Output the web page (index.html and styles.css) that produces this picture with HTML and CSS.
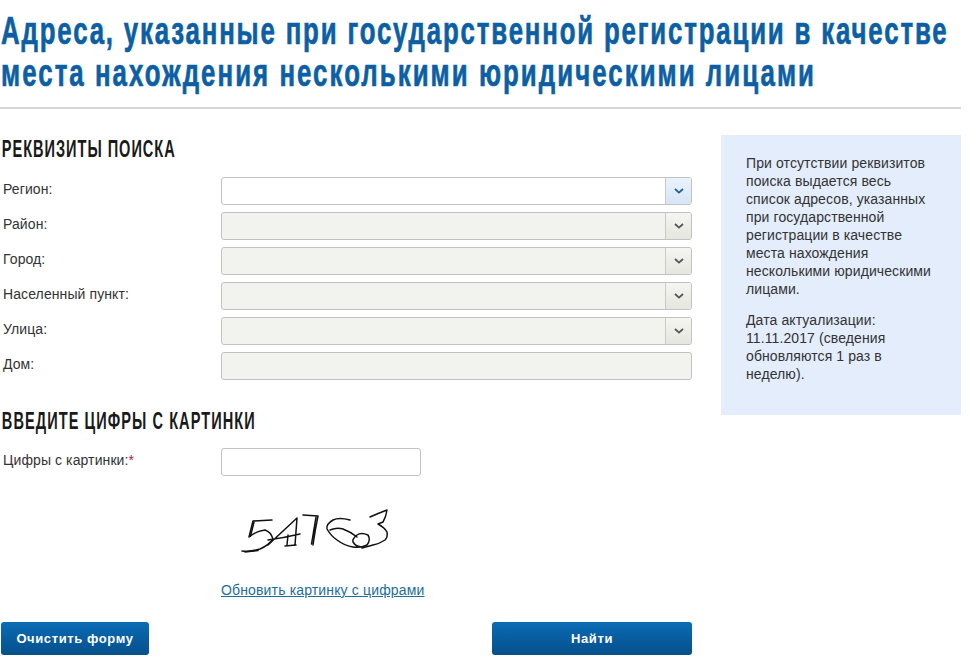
FILE: index.html
```html
<!DOCTYPE html>
<html lang="ru">
<head>
<meta charset="utf-8">
<title>Адреса</title>
<link rel="stylesheet" href="styles.css">
</head>
<body>
<main class="page">
  <header class="title-wrap">
    <h1 class="title"><span class="title-line">Адреса, указанные при государственной регистрации в качестве</span> <span class="title-line title-line-2">места нахождения несколькими юридическими лицами</span></h1>
  </header>
  <div class="columns">
    <form class="form">
      <h2 class="section section-first">Реквизиты поиска</h2>
      <div class="fields">
        <div class="row"><label class="label">Регион:</label><div class="select"><span class="select-value"></span><span class="arrow"><svg viewBox="0 0 10 6" class="chev chev-blue"><path d="M1 1l4 3.6L9 1"/></svg></span></div></div>
        <div class="row"><label class="label">Район:</label><div class="select off"><span class="select-value"></span><span class="arrow"><svg viewBox="0 0 10 6" class="chev"><path d="M1 1l4 3.6L9 1"/></svg></span></div></div>
        <div class="row"><label class="label">Город:</label><div class="select off"><span class="select-value"></span><span class="arrow"><svg viewBox="0 0 10 6" class="chev"><path d="M1 1l4 3.6L9 1"/></svg></span></div></div>
        <div class="row"><label class="label">Населенный пункт:</label><div class="select off"><span class="select-value"></span><span class="arrow"><svg viewBox="0 0 10 6" class="chev"><path d="M1 1l4 3.6L9 1"/></svg></span></div></div>
        <div class="row"><label class="label">Улица:</label><div class="select off"><span class="select-value"></span><span class="arrow"><svg viewBox="0 0 10 6" class="chev"><path d="M1 1l4 3.6L9 1"/></svg></span></div></div>
        <div class="row"><label class="label">Дом:</label><div class="select off"><span class="select-value"></span></div></div>
      </div>
      <h2 class="section section-second">Введите цифры с картинки</h2>
      <div class="row"><label class="label">Цифры с картинки:<span class="req">*</span></label><div class="captcha-input"></div></div>
      <div class="captcha-block">
        <svg class="captcha" viewBox="0 0 180 60" role="img" aria-label="Картинка с цифрами">
          <g fill="none" stroke="#111" stroke-width="1.5" stroke-linecap="round" stroke-linejoin="round">
            <path d="M21 49Q30 50 39 47Q48 43 52 37Q50 30 44 28Q35 29 28 35L32 19L51 18"/>
            <path d="M24 50L37 48.500M29.500 34L33 20"/>
            <path d="M47 43L76 16L74 43M47 38Q62 36 79 32M64 44L75 43M67 33L66 43"/>
            <path d="M82 13L97 14Q94 28 92 43M95 15L90.500 42"/>
            <path d="M129 18Q118 15 112 18Q105 22 106 27Q110 34 116 38Q124 44 132 45Q140 46 146 43Q150 38 147 33Q140 30 136 33Q131 37 132 40Q135 45 141 45"/>
            <path d="M109 28Q116 25 122 27Q130 30 136 35"/>
            <path d="M149 15Q158 11 166 8Q165 15 162 20L157 22Q164 26 166 30Q167 35 164 38Q158 42 152 43L141 46"/>
          </g>
        </svg>
        <a class="refresh" href="#">Обновить картинку с цифрами</a>
      </div>
      <div class="actions">
        <button class="btn btn-clear" type="button">Очистить форму</button>
        <button class="btn btn-find" type="button">Найти</button>
      </div>
    </form>
    <aside class="info">
      <p class="info-p">При отсутствии реквизитов поиска выдается весь список адресов, указанных при государственной регистрации в качестве места нахождения несколькими юридическими лицами.</p>
      <p class="info-p">Дата актуализации: 11.11.2017 (сведения обновляются 1 раз в неделю).</p>
    </aside>
  </div>
</main>
</body>
</html>
```
FILE: styles.css
```css
* { box-sizing: border-box; }
html, body { margin: 0; padding: 0; background: #fff; }
body { font-family: "Liberation Sans", Arial, sans-serif; font-size: 14px; letter-spacing: 0.1px; color: #333; }
.page { width: 961px; height: 672px; overflow: hidden; }
.title-wrap { height: 109px; padding: 10px 0 0 1px; margin-bottom: 0; border-bottom: 2px solid #d6d6d6; overflow: hidden; }
.title {
  margin: 0; width: 1412px;
  transform: scaleX(0.68); transform-origin: 0 0;
  font-family: "Liberation Sans", sans-serif;
  font-size: 38px; line-height: 42px; font-weight: 700; color: #0c5fa5; letter-spacing: 2.67px;
  -webkit-text-stroke: 0.7px #0c5fa5;
}
.title-line { display: block; white-space: nowrap; }
.title-line-2 { letter-spacing: 3px; }
.columns { display: flex; justify-content: space-between; align-items: flex-start; padding-top: 26px; }
.form { width: 692px; }
.section {
  margin: 0; padding-left: 3px; width: 1000px;
  transform: scaleX(0.62); transform-origin: 0 0;
  font-family: "Liberation Sans", sans-serif;
  font-size: 23.5px; line-height: 26px; font-weight: 700; color: #1a1a1a; text-transform: uppercase; letter-spacing: 1.56px;
}
.section-first { margin-top: 1px; margin-bottom: 15px; }
.section-second { margin-top: 28px; margin-bottom: 14px; letter-spacing: 1.7px; }
.fields { display: flex; flex-direction: column; gap: 7px; }
.row { display: flex; align-items: flex-start; height: 28px; }
.label { width: 221px; padding: 4px 0 0 3px; line-height: 16px; color: #333; flex: none; }
.req { color: #a0203a; }
.select { flex: 1; height: 28px; display: flex; border: 1px solid #c2c2c2; border-radius: 3px; background: #fff; overflow: hidden; }
.select.off { background: #f2f2ef; }
.select-value { flex: 1; }
.arrow { width: 26px; flex: none; display: flex; align-items: center; justify-content: center; border-left: 1px solid #c9c9c9; background: linear-gradient(#eaf3fb, #d6e6f5); }
.off .arrow { background: linear-gradient(#f5f5f1, #e6e6e0); }
.chev { width: 10px; height: 6px; fill: none; stroke: #555; stroke-width: 1.8; }
.chev-blue { stroke: #1d6196; }
.captcha-input { width: 200px; height: 28px; border: 1px solid #c2c2c2; border-radius: 3px; background: #fff; }
.captcha-block { padding: 26px 0 0 221px; }
.captcha { display: block; width: 180px; height: 60px; }
.refresh { display: block; margin-top: 20px; line-height: 16px; color: #1d6e98; text-decoration: underline; letter-spacing: 0.15px; }
.actions { display: flex; justify-content: space-between; padding: 24px 0 0 1px; }
.btn { height: 33px; border: 0; border-radius: 3px; background: linear-gradient(#0a6db5, #075a9c 60%, #06508c); color: #fff; font-family: "Liberation Sans", sans-serif; font-size: 13px; font-weight: 700; letter-spacing: 0.6px; }
.btn-clear { width: 148px; }
.btn-find { width: 200px; }
.info { width: 240px; height: 280px; background: #e3edfb; padding: 19px 25px 0; line-height: 18px; color: #333; }
.info-p { margin: 0 0 13px; }
```
